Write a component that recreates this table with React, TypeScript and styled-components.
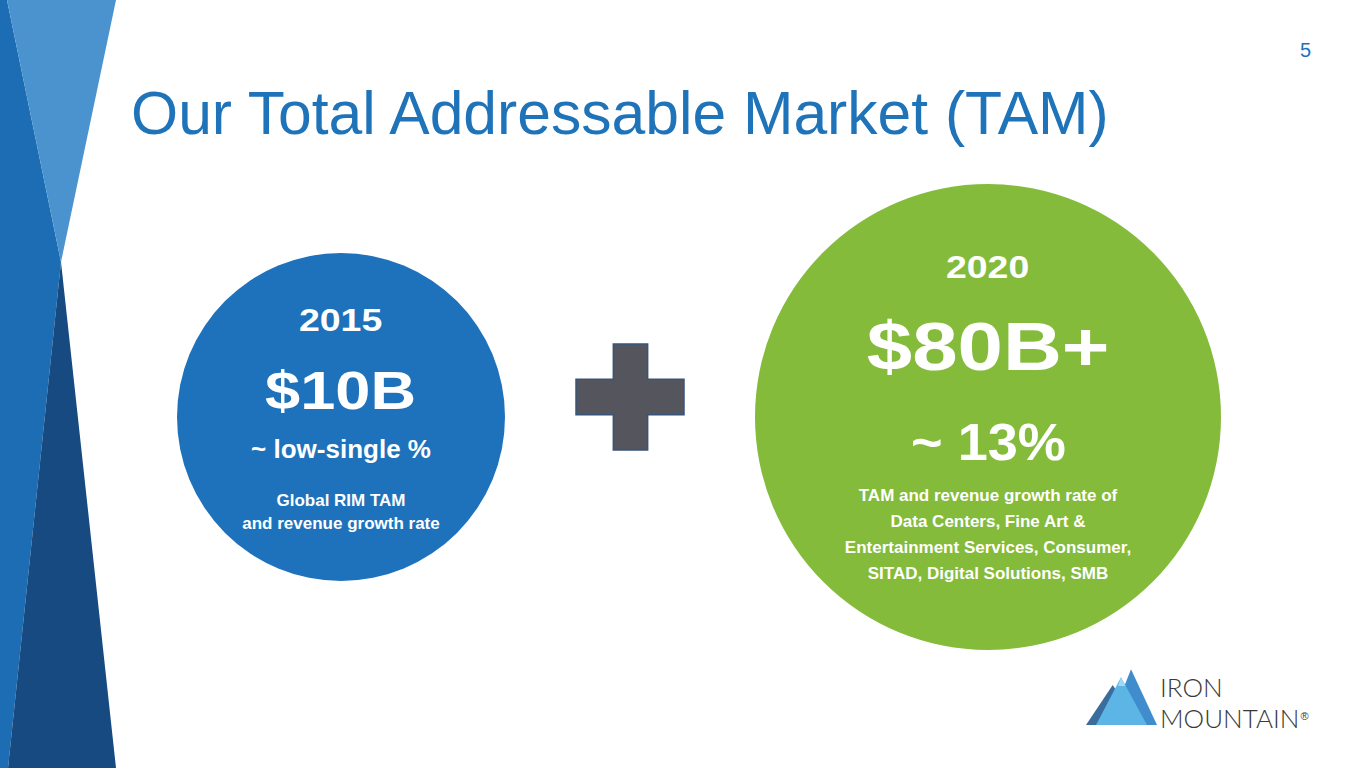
import React from "react";
import styled, { createGlobalStyle } from "styled-components";

const GlobalStyle = createGlobalStyle`
  html, body { margin: 0; padding: 0; background: #ffffff; }
  body { font-family: "Liberation Sans", Arial, sans-serif; }
  * { box-sizing: border-box; }
`;

const Slide = styled.div`
  width: 1365px;
  height: 768px;
  display: flex;
  overflow: hidden;
  background: #ffffff;
`;

const Decoration = styled.svg`
  display: block;
  flex-shrink: 0;
  width: 116px;
  height: 768px;
`;

const Content = styled.main`
  flex: 1;
  min-width: 0;
  display: flex;
  flex-direction: column;
  padding: 40px 54px 0 15px;
`;

const HeaderRow = styled.header`
  display: flex;
  justify-content: space-between;
  align-items: flex-start;
`;

const Title = styled.h1`
  margin: 43px 0 0;
  font-family: "Liberation Sans", Arial, sans-serif;
  font-weight: 400;
  font-size: 60.6px;
  line-height: 60px;
  color: #1f73b9;
  white-space: nowrap;
`;

const PageNum = styled.div`
  font-size: 20px;
  line-height: 20px;
  color: #1f73b9;
`;

const CircleRow = styled.section`
  display: flex;
  align-items: center;
  gap: 70px;
  margin-top: 41px;
  padding-left: 46px;
`;

const Circle = styled.div<{ $size: number; $color: string; $pad: number }>`
  flex-shrink: 0;
  width: ${(p) => p.$size}px;
  height: ${(p) => p.$size}px;
  border-radius: 50%;
  background: ${(p) => p.$color};
  padding-top: ${(p) => p.$pad}px;
  display: flex;
  flex-direction: column;
  align-items: center;
  color: #ffffff;
  font-weight: 700;
  text-align: center;
`;

const Wide = styled.div<{ $size: number; $stretch: number; $mt: number }>`
  margin-top: ${(p) => p.$mt}px;
  font-size: ${(p) => p.$size}px;
  line-height: ${(p) => p.$size}px;
  white-space: nowrap;
  transform: scaleX(${(p) => p.$stretch});
  transform-origin: center;
`;

const Caption = styled.div<{ $lh: number; $mt: number }>`
  margin-top: ${(p) => p.$mt}px;
  font-size: 17px;
  line-height: ${(p) => p.$lh}px;
  white-space: nowrap;
`;

const PlusIcon = styled.svg`
  display: block;
  flex-shrink: 0;
  width: 110px;
  height: 108px;
  margin-bottom: 40px;
`;

const LogoRow = styled.footer`
  display: flex;
  align-items: flex-start;
  margin-top: 17px;
  padding-left: 954px;
`;

const Mountains = styled.svg`
  display: block;
  flex-shrink: 0;
  width: 72px;
  height: 58px;
`;

const LogoText = styled.div`
  margin: 5px 0 0 3px;
  font-family: Lato, "Open Sans", sans-serif;
  font-weight: 300;
  font-size: 26px;
  line-height: 31px;
  color: #3a3a3a;
  white-space: nowrap;
`;

const Reg = styled.span`
  display: inline-block;
  vertical-align: top;
  margin: 8px 0 0 1px;
  font-family: "Liberation Sans", Arial, sans-serif;
  font-size: 11px;
  line-height: 11px;
`;

export default function App() {
  return (
    <>
      <GlobalStyle />
      <Slide>
        <Decoration viewBox="0 0 116 768" preserveAspectRatio="none">
          <polygon points="0,0 7,0 61,262 8,768 0,768" fill="#1d6db5" />
          <polygon points="7,0 116,0 61,262" fill="#4b93ce" />
          <polygon points="61,262 116,768 8,768" fill="#164a80" />
        </Decoration>
        <Content>
          <HeaderRow>
            <Title>Our Total Addressable Market (TAM)</Title>
            <PageNum>5</PageNum>
          </HeaderRow>
          <CircleRow>
            <Circle $size={328} $color="#1e72bc" $pad={51}>
              <Wide $size={32} $stretch={1.17} $mt={0}>2015</Wide>
              <Wide $size={54} $stretch={1.17} $mt={27}>$10B</Wide>
              <Wide $size={26} $stretch={1} $mt={19}>~ low-single %</Wide>
              <Caption $lh={23} $mt={27}>
                Global RIM TAM
                <br />
                and revenue growth rate
              </Caption>
            </Circle>
            <PlusIcon viewBox="-1 -1 112 110">
              <polygon
                points="38,0 73,0 73,36 110,36 110,72 73,72 73,108 38,108 38,72 0,72 0,36 38,36"
                fill="#55565d"
                stroke="#36557c"
                strokeWidth="1.5"
              />
            </PlusIcon>
            <Circle $size={466} $color="#84bb3a" $pad={67}>
              <Wide $size={32} $stretch={1.17} $mt={0}>2020</Wide>
              <Wide $size={68} $stretch={1.2} $mt={29}>$80B+</Wide>
              <Wide $size={52} $stretch={1.04} $mt={36}>~ 13%</Wide>
              <Caption $lh={26} $mt={15}>
                TAM and revenue growth rate of
                <br />
                Data Centers, Fine Art &amp;
                <br />
                Entertainment Services, Consumer,
                <br />
                SITAD, Digital Solutions, SMB
              </Caption>
            </Circle>
          </CircleRow>
          <LogoRow>
            <Mountains viewBox="4 7 72 58">
              <polygon points="5,65 31.7,25 58,65" fill="#3a6c9e" />
              <polygon points="28,65 50,9.3 76,65" fill="#3f8dcc" />
              <polygon points="15,65 40,17.3 66,65" fill="#5cb5e5" />
              <polygon points="40,17.3 44.5,26 37,26" fill="#9fd9f3" />
            </Mountains>
            <LogoText>
              IRON
              <br />
              MOUNTAIN<Reg>®</Reg>
            </LogoText>
          </LogoRow>
        </Content>
      </Slide>
    </>
  );
}
